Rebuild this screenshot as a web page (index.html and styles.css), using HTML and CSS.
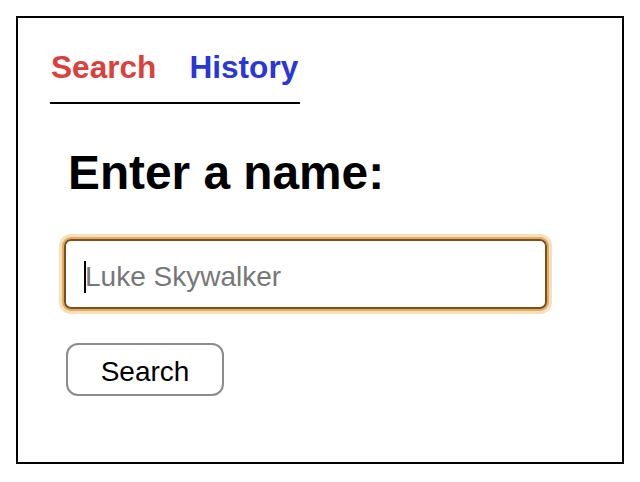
FILE: index.html
```html
<!DOCTYPE html>
<html>
<head>
<meta charset="utf-8">
<link rel="stylesheet" href="styles.css">
</head>
<body>
<div class="frame">
  <nav class="tabs">
    <span class="tab tab-active">Search</span>
    <span class="tab tab-link">History</span>
  </nav>
  <main class="panel">
    <h1 class="title">Enter a name:</h1>
    <div class="field"><span class="caret"></span><span class="placeholder">Luke Skywalker</span></div>
    <button class="btn">Search</button>
  </main>
</div>
</body>
</html>
```
FILE: styles.css
```css
html, body {
  margin: 0;
  padding: 0;
  background: #fff;
}
body {
  font-family: "Liberation Sans", Arial, Helvetica, sans-serif;
  padding: 16px;
}
.frame {
  width: 604px;
  height: 444px;
  border: 2px solid #000;
  background: #fff;
}
.tabs {
  display: flex;
  gap: 33px;
  width: 249px;
  margin: 31px 0 0 32px;
  padding: 0 0 17px 1px;
  border-bottom: 2px solid #000;
}
.tab {
  font-size: 31.6px;
  font-weight: bold;
  line-height: 36px;
}
.tab-active { color: #d9413a; }
.tab-link { color: #2937d6; }
.panel {
  padding: 41px 0 0 46px;
}
.title {
  margin: 0 0 39px 4px;
  font-size: 47.8px;
  font-weight: bold;
  line-height: 55px;
}
.field {
  box-sizing: border-box;
  width: 483px;
  height: 70px;
  border: 2px solid #7b4f1c;
  border-radius: 7px;
  box-shadow: 0 0 0 2px #e0ab62, 0 0 0 5px #f6e0bc;
  display: flex;
  align-items: center;
  padding: 5px 0 0 18px;
}
.caret {
  width: 2px;
  height: 32px;
  background: #000;
  margin-right: -1px;
}
.placeholder {
  font-size: 28px;
  color: #777;
}
.btn {
  display: block;
  margin: 34px 0 0 2px;
  width: 158px;
  height: 53px;
  border: 2px solid #8c8c8c;
  border-radius: 12px;
  background: #fff;
  font-family: "Liberation Sans", Arial, Helvetica, sans-serif;
  font-size: 28px;
  color: #000;
  padding: 4px 0 0 0;
}
```
